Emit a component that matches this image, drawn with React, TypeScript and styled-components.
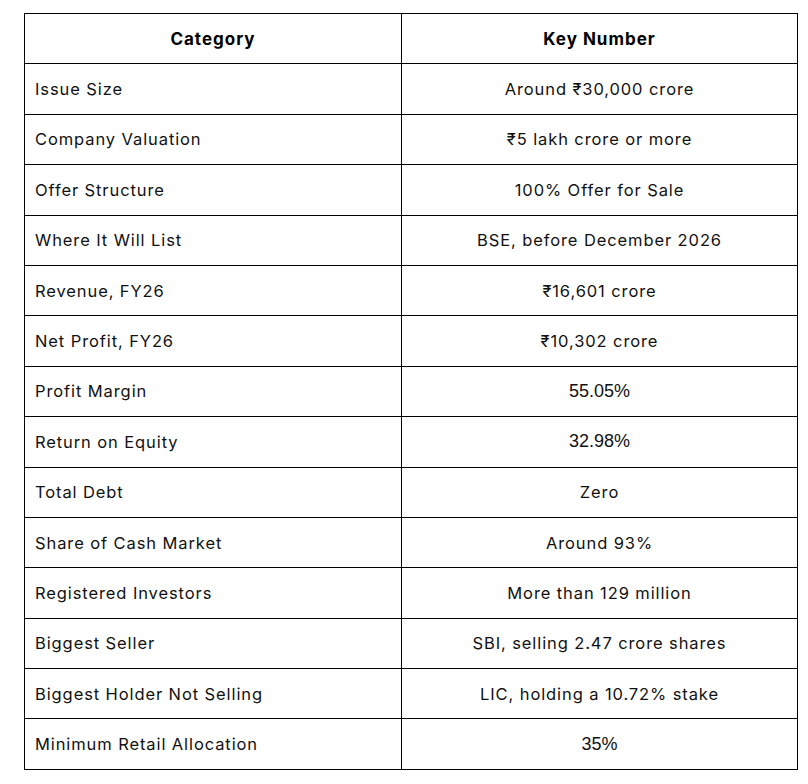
import React from "react";
import styled, { createGlobalStyle } from "styled-components";

const GlobalStyle = createGlobalStyle`
  html, body {
    margin: 0;
    padding: 0;
    background: #ffffff;
  }
  body {
    font-family: Inter, "Noto Sans", sans-serif;
    color: #111111;
  }
`;

const Page = styled.div`
  padding: 13px 0 0 24px;
`;

const Table = styled.table`
  width: 773px;
  border-collapse: collapse;
  table-layout: fixed;
`;

const Col = styled.col<{ $width: number }>`
  width: ${(p) => p.$width}px;
`;

const HeadCell = styled.th`
  height: 49.4px;
  padding: 0 10px;
  border: 1px solid #000;
  font-size: 17px;
  font-weight: 700;
  letter-spacing: 1px;
  text-align: center;
  color: #000;
`;

const Cell = styled.td<{ $center?: boolean; $plain?: boolean }>`
  height: 49.4px;
  padding: 0 10px;
  border: 1px solid #000;
  font-size: ${(p) => (p.$plain ? "18px" : "16.5px")};
  letter-spacing: ${(p) => (p.$plain ? "0" : "0.9px")};
  font-family: ${(p) =>
    p.$plain ? `"Liberation Sans", Arial, sans-serif` : "inherit"};
  text-align: ${(p) => (p.$center ? "center" : "left")};
  vertical-align: middle;
`;

type Row = { category: string; value: string; plain?: boolean };

const rows: Row[] = [
  { category: "Issue Size", value: "Around ₹30,000 crore" },
  { category: "Company Valuation", value: "₹5 lakh crore or more" },
  { category: "Offer Structure", value: "100% Offer for Sale" },
  { category: "Where It Will List", value: "BSE, before December 2026" },
  { category: "Revenue, FY26", value: "₹16,601 crore" },
  { category: "Net Profit, FY26", value: "₹10,302 crore" },
  { category: "Profit Margin", value: "55.05%", plain: true },
  { category: "Return on Equity", value: "32.98%", plain: true },
  { category: "Total Debt", value: "Zero" },
  { category: "Share of Cash Market", value: "Around 93%" },
  { category: "Registered Investors", value: "More than 129 million" },
  { category: "Biggest Seller", value: "SBI, selling 2.47 crore shares" },
  { category: "Biggest Holder Not Selling", value: "LIC, holding a 10.72% stake" },
  { category: "Minimum Retail Allocation", value: "35%", plain: true },
];

export default function App() {
  return (
    <>
      <GlobalStyle />
      <Page>
        <Table>
          <colgroup>
            <Col $width={377} />
            <Col $width={396} />
          </colgroup>
          <thead>
            <tr>
              <HeadCell>Category</HeadCell>
              <HeadCell>Key Number</HeadCell>
            </tr>
          </thead>
          <tbody>
            {rows.map((r) => (
              <tr key={r.category}>
                <Cell>{r.category}</Cell>
                <Cell $center $plain={r.plain}>
                  {r.value}
                </Cell>
              </tr>
            ))}
          </tbody>
        </Table>
      </Page>
    </>
  );
}
